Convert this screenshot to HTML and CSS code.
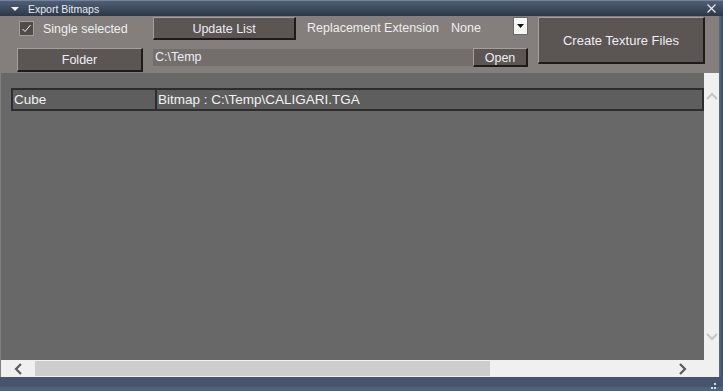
FILE: index.html
```html
<!DOCTYPE html>
<html lang="en">
<head>
    <meta charset="UTF-8">
    <title>Export Bitmaps</title>
    <link rel="stylesheet" href="styles.css">
</head>
<body>
    <div class="window">
        <div class="titlebar">
            <span class="collapse"></span>
            <span class="title">Export Bitmaps</span>
            <span class="close">
                <svg width="9" height="9" viewBox="0 0 9 9"><path d="M0.5 0.5 L8.5 8.5 M8.5 0.5 L0.5 8.5" stroke="#e8ecf2" stroke-width="1.2"/></svg>
            </span>
        </div>

        <div class="frame">
            <div class="main">
                <div class="toolbar">
                    <label class="check">
                        <span class="box">
                            <svg width="13" height="13" viewBox="0 0 13 13"><path d="M2.5 7 L5 9.5 L10.5 3" fill="none" stroke="#f2f2f2" stroke-width="1"/></svg>
                        </span>
                        Single selected
                    </label>
                    <div class="row-one">
                        <button class="btn update">Update List</button>
                        <span class="label">Replacement Extension</span>
                        <span class="label none">None</span>
                        <span class="drop">
                            <svg width="7" height="4" viewBox="0 0 7 4"><path d="M0 0 H7 L3.5 4 Z" fill="#111"/></svg>
                        </span>
                    </div>
                    <button class="btn create">Create Texture Files</button>
                    <button class="btn folder">Folder</button>
                    <div class="row-two">
                        <div class="path">C:\Temp</div>
                        <button class="btn open">Open</button>
                    </div>
                </div>

                <div class="content">
                    <div class="list">
                        <table class="items">
                            <tr>
                                <td class="name">Cube</td>
                                <td>Bitmap : C:\Temp\CALIGARI.TGA</td>
                            </tr>
                        </table>
                    </div>
                    <div class="vscroll">
                        <svg width="12" height="8" viewBox="0 0 12 8"><path d="M1 7 L6 2 L11 7" fill="none" stroke="#c6c6c6" stroke-width="2"/></svg>
                        <svg width="12" height="8" viewBox="0 0 12 8"><path d="M1 1 L6 6 L11 1" fill="none" stroke="#c6c6c6" stroke-width="2"/></svg>
                    </div>
                </div>

                <div class="hscroll">
                    <span class="arrow left">
                        <svg width="8" height="12" viewBox="0 0 8 12"><path d="M7 1 L2 6 L7 11" fill="none" stroke="#5a5a5a" stroke-width="2.2"/></svg>
                    </span>
                    <div class="track"><div class="thumb"></div></div>
                    <span class="arrow right">
                        <svg width="8" height="12" viewBox="0 0 8 12"><path d="M1 1 L6 6 L1 11" fill="none" stroke="#5a5a5a" stroke-width="2.2"/></svg>
                    </span>
                </div>
            </div>
            <div class="edge"></div>
        </div>

        <div class="footer">
            <span class="grip">
                <svg width="9" height="7" viewBox="0 0 9 7"><path d="M6 0h2v2h-2z M3 4h2v2h-2z M6 4h2v2h-2z" fill="#d8dee6"/></svg>
            </span>
        </div>
    </div>
</body>
</html>
```

FILE: styles.css
```css
/* Base */
body {
    margin: 0;
    font-family: "Liberation Sans", Arial, sans-serif;
    background: #46556d;
}

.window {
    width: 723px;
    height: 391px;
    display: flex;
    flex-direction: column;
    overflow: hidden;
}

/* Title bar */
.titlebar {
    height: 16px;
    flex: none;
    display: flex;
    align-items: center;
    background: linear-gradient(#4f5f75, #2c3848);
    color: #e8ecf2;
    font-size: 10.5px;
    border-top: 1px solid #75839a;
    box-sizing: border-box;
}

.collapse {
    width: 0;
    height: 0;
    margin: 1px 9px 0 11px;
    border-left: 4px solid transparent;
    border-right: 4px solid transparent;
    border-top: 4px solid #f2f4f8;
}

.title {
    flex: 1;
}

.close {
    display: flex;
    margin-right: 7px;
}

/* Frame */
.frame {
    flex: 1;
    display: flex;
    min-height: 0;
}

.main {
    flex: 1;
    display: flex;
    flex-direction: column;
    background: #847e7c;
}

.edge {
    width: 4px;
    background: linear-gradient(90deg, #5b6a7e, #3b495d);
}

/* Toolbar */
.toolbar {
    height: 57px;
    flex: none;
    display: grid;
    grid-template-columns: 126px 375px 167px;
    grid-template-rows: 23px 24px;
    column-gap: 10px;
    row-gap: 8px;
    padding: 1px 0 0 17px;
    box-sizing: border-box;
    color: #eeeef4;
    font-size: 12.5px;
}

.check {
    display: flex;
    align-items: center;
    gap: 9px;
    padding-left: 2px;
}

.box {
    width: 13px;
    height: 13px;
    display: flex;
    background: #514b4a;
    border: 1px solid #a39d9b;
}

.btn {
    font-family: inherit;
    font-size: 12.5px;
    color: #eeeef4;
    background: #5b5554;
    border: 1px solid #a49e9c;
    border-right: 2px solid #1f1b1b;
    border-bottom: 2px solid #1f1b1b;
    padding: 1px 0 0;
    cursor: pointer;
}

.row-one {
    display: flex;
    align-items: center;
}

.update {
    width: 143px;
    height: 23px;
    margin-right: 11px;
}

.label {
    margin-top: -2px;
}

.none {
    margin-left: 12px;
}

.drop {
    width: 15px;
    height: 18px;
    margin-left: auto;
    margin-top: -5px;
    display: flex;
    align-items: center;
    justify-content: center;
    background: #f6f6f6;
    border: 1px solid #6d6766;
    box-sizing: border-box;
}

.create {
    grid-row: span 2;
    height: 47px;
    font-size: 13px;
}

.folder {
    height: 24px;
}

.row-two {
    display: flex;
    align-items: flex-start;
}

.path {
    width: 320px;
    height: 17px;
    margin-top: 1px;
    padding-left: 2px;
    box-sizing: border-box;
    background: #736d6c;
    line-height: 17px;
}

.open {
    width: 55px;
    height: 19px;
}

/* List area */
.content {
    flex: 1;
    display: flex;
    margin-left: 1px;
    min-height: 0;
}

.list {
    flex: 1;
    background: #686868;
    padding: 15px 0 0 10px;
}

.items {
    width: 100%;
    border-collapse: collapse;
    color: #f2f2f2;
    font-size: 13.5px;
}

.items td {
    height: 19px;
    padding: 0 0 0 1px;
    background: #5e5e5e;
    border: 2px solid #2d2d2d;
}

.items .name {
    width: 141px;
}

.vscroll {
    width: 15px;
    background: #f0f0f0;
    display: flex;
    flex-direction: column;
    justify-content: space-between;
    align-items: center;
    padding: 19px 0 19px;
}

/* Horizontal scroll bar */
.hscroll {
    height: 17px;
    flex: none;
    display: flex;
    align-items: center;
    background: #f0f0f0;
    margin-left: 1px;
}

.arrow {
    width: 34px;
    display: flex;
    justify-content: center;
}

.track {
    flex: 1;
    height: 15px;
}

.thumb {
    width: 455px;
    height: 15px;
    background: #cdcdcd;
}

.arrow.right {
    width: 43px;
    justify-content: flex-start;
    padding-left: 3px;
    box-sizing: border-box;
}

/* Footer strip */
.footer {
    height: 14px;
    flex: none;
    display: flex;
    justify-content: flex-end;
    align-items: flex-end;
    background: linear-gradient(#46556d 0, #46556d 10px, #4d6577 10px);
}

.grip {
    display: flex;
    margin: 0 6px 1px 0;
}
```
